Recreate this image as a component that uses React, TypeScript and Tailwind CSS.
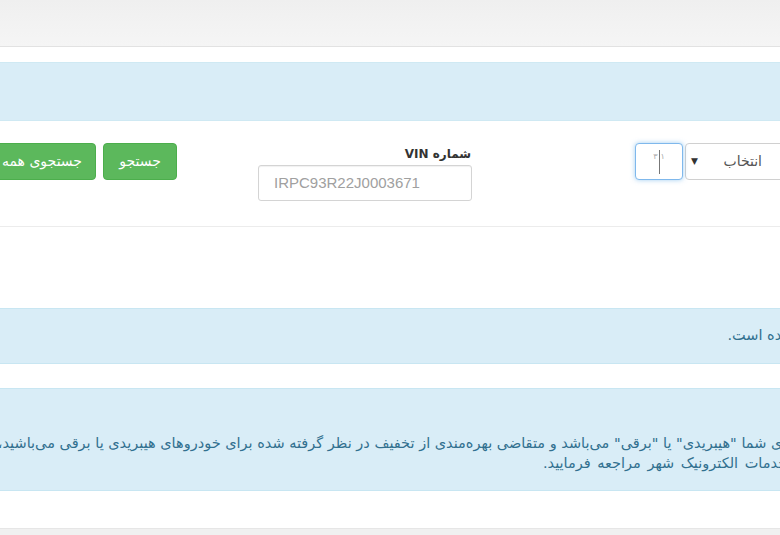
import React from "react";

export default function App() {
  const fa = { fontFamily: '"DejaVu Sans", "Noto Sans", sans-serif' };
  return (
    <div
      dir="rtl"
      className="w-[780px] h-[535px] overflow-hidden bg-white flex flex-col"
      style={fa}
    >
      {/* top bar */}
      <div className="h-[47px] shrink-0 bg-gradient-to-b from-[#efefef] to-[#f5f5f5] border-b border-[#e2e2e2]" />
      <div className="h-[15px] shrink-0" />
      {/* panel heading */}
      <div className="h-[59px] shrink-0 bg-[#d9edf7] border-y border-[#cfe9f3]" />
      {/* panel body with form */}
      <div className="h-[106px] shrink-0 border-b border-[#ececec] pt-[22px] flex flex-row items-start">
        {/* select + code input */}
        <div className="flex flex-row items-start mr-[-22px] shrink-0">
          <div className="w-[117px] h-[37px] border border-[#d0d0d0] rounded-[4px] bg-white flex flex-row items-center justify-between pr-[39px] pl-[5px] text-[14px] text-[#555]">
            <span>انتخاب</span>
            <span className="text-[9px] text-[#333]">▼</span>
          </div>
          <div className="w-[48px] h-[37px] mr-[2px] border border-[#7fb8ec] rounded-[4px] bg-white shadow-[0_0_5px_rgba(102,175,233,0.6)] flex items-center justify-center">
            <span className="text-[8px] text-[#aaa] leading-none self-start mt-[9px]">۱</span>
            <span className="w-[1px] h-[24px] bg-[#777] mx-[1px]" />
            <span className="text-[8px] text-[#aaa] leading-none self-start mt-[9px]">۳</span>
          </div>
        </div>
        {/* VIN group */}
        <div className="mr-[163px] w-[214px] shrink-0 flex flex-col pt-[2px]">
          <div className="h-[18px] leading-[18px] text-[12px] font-bold text-[#333] pr-[1px]">
            شماره VIN
          </div>
          <div
            dir="ltr"
            className="mt-[2px] h-[36px] border border-[#d4d4d4] rounded-[3px] flex items-center pl-[15px] text-[15px] text-[#a0a0a0] shadow-[inset_0_1px_1px_rgba(0,0,0,0.06)]"
            style={{ fontFamily: '"Liberation Sans", Arial, sans-serif' }}
          >
            IRPC93R22J0003671
          </div>
        </div>
        {/* buttons */}
        <div className="mr-[81px] flex flex-row items-start shrink-0">
          <div className="w-[74px] h-[37px] rounded-[4px] bg-[#5cb85c] border border-[#4cae4c] text-white text-[14px] flex items-center justify-center">
            جستجو
          </div>
          <div className="mr-[7px] w-[140px] h-[37px] rounded-[4px] bg-[#5cb85c] border border-[#4cae4c] text-white text-[14px] flex items-center justify-start pr-[13px] whitespace-nowrap">
            جستجوی همه
          </div>
        </div>
      </div>
      <div className="h-[81px] shrink-0" />
      {/* alert 1 */}
      <div className="h-[56px] shrink-0 bg-[#d9edf7] border-y border-[#c8e6f2] flex items-center text-[#31708f] text-[14.5px] whitespace-nowrap">
        <div className="mr-[-95px]">خودرو یافت نشده است.</div>
      </div>
      <div className="h-[24px] shrink-0" />
      {/* alert 2 */}
      <div className="h-[103px] shrink-0 bg-[#d9edf7] border-y border-[#c8e6f2] text-[#31708f] text-[14.5px] whitespace-nowrap pt-[24px] leading-[20px]">
        <div className="mr-[-60px]">توجه:</div>
        <div className="mr-[-155px]">
          چنانچه نوع سوخت خودروی شما "هیبریدی" یا "برقی" می‌باشد و متقاضی بهره‌مندی از تخفیف در نظر گرفته شده برای خودروهای هیبریدی یا برقی می‌باشید، لطفا
        </div>
        <div className="mr-[-62px] [word-spacing:2px]">به دفاتر خدمات الکترونیک شهر مراجعه فرمایید.</div>
      </div>
      <div className="h-[37px] shrink-0" />
      <div className="flex-1 bg-[#f0f0f0] border-t border-[#e6e6e6]" />
    </div>
  );
}
